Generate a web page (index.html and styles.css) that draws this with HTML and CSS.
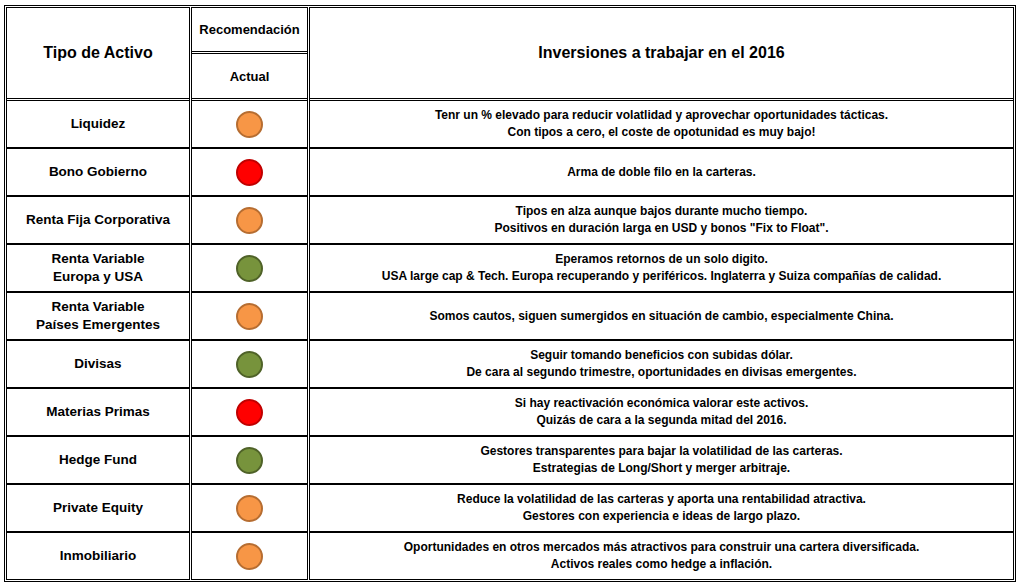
FILE: index.html
```html
<!DOCTYPE html>
<html lang="es">
<head>
    <meta charset="UTF-8">
    <meta name="viewport" content="width=device-width, initial-scale=1.0">
    <title>Inversiones 2016</title>
    <link rel="stylesheet" href="styles.css">
</head>
<body>
    <table class="assets">
        <colgroup>
            <col class="col-type">
            <col class="col-rec">
            <col class="col-desc">
        </colgroup>
        <thead>
            <tr class="head-top">
                <th rowspan="2" class="big">Tipo de Activo</th>
                <th class="rec">Recomendación</th>
                <th rowspan="2" class="big">Inversiones a trabajar en el 2016</th>
            </tr>
            <tr class="head-bottom">
                <th class="actual">Actual</th>
            </tr>
        </thead>
        <tbody>
            <tr>
                <td class="label">Liquidez</td>
                <td><span class="dot orange"></span></td>
                <td class="desc">Tenr un % elevado para reducir volatlidad y aprovechar oportunidades tácticas.<br>Con tipos a cero, el coste de opotunidad es muy bajo!</td>
            </tr>
            <tr>
                <td class="label">Bono Gobierno</td>
                <td><span class="dot red"></span></td>
                <td class="desc">Arma de doble filo en la carteras.</td>
            </tr>
            <tr>
                <td class="label">Renta Fija Corporativa</td>
                <td><span class="dot orange"></span></td>
                <td class="desc">Tipos en alza aunque bajos durante mucho tiempo.<br>Positivos en duración larga en USD y bonos "Fix to Float".</td>
            </tr>
            <tr>
                <td class="label">Renta Variable<br>Europa y USA</td>
                <td><span class="dot green"></span></td>
                <td class="desc">Eperamos retornos de un solo digito.<br>USA large cap &amp; Tech. Europa recuperando y periféricos. Inglaterra y Suiza compañías de calidad.</td>
            </tr>
            <tr>
                <td class="label">Renta Variable<br>Países Emergentes</td>
                <td><span class="dot orange"></span></td>
                <td class="desc">Somos cautos, siguen sumergidos en situación de cambio, especialmente China.</td>
            </tr>
            <tr>
                <td class="label">Divisas</td>
                <td><span class="dot green"></span></td>
                <td class="desc">Seguir tomando beneficios con subidas dólar.<br>De cara al segundo trimestre, oportunidades en divisas emergentes.</td>
            </tr>
            <tr>
                <td class="label">Materias Primas</td>
                <td><span class="dot red"></span></td>
                <td class="desc">Si hay reactivación económica valorar este activos.<br>Quizás de cara a la segunda mitad del 2016.</td>
            </tr>
            <tr>
                <td class="label">Hedge Fund</td>
                <td><span class="dot green"></span></td>
                <td class="desc">Gestores transparentes para bajar la volatilidad de las carteras.<br>Estrategias de Long/Short y merger arbitraje.</td>
            </tr>
            <tr>
                <td class="label">Private Equity</td>
                <td><span class="dot orange"></span></td>
                <td class="desc">Reduce la volatilidad de las carteras y aporta una rentabilidad atractiva.<br>Gestores con experiencia e ideas de largo plazo.</td>
            </tr>
            <tr class="last">
                <td class="label">Inmobiliario</td>
                <td><span class="dot orange"></span></td>
                <td class="desc">Oportunidades en otros mercados más atractivos para construir una cartera diversificada.<br>Activos reales como hedge a inflación.</td>
            </tr>
        </tbody>
    </table>
</body>
</html>
```

FILE: styles.css
```css
body {
    margin: 0;
    background: #fff;
    color: #000;
    font-family: 'Liberation Sans', Arial, sans-serif;
}
.assets {
    margin: 5px 0 0 4px;
    width: 1012px;
    table-layout: fixed;
    border-collapse: separate;
    border-spacing: 1px 0;
    border: 1px solid #000;
    padding: 1px 0;
}
.col-type {
    width: 184px;
}
.col-rec {
    width: 117px;
}
.col-desc {
    width: 705px;
}
.assets th,
.assets td {
    box-sizing: border-box;
    padding: 0;
    border: 1px solid #000;
    border-top: none;
    text-align: center;
    vertical-align: middle;
    font-weight: bold;
}
.assets thead th {
    border-bottom: 3px double #000;
}
.head-top th {
    border-top: 1px solid #000;
}
.head-top {
    height: 47px;
}
.head-bottom {
    height: 47px;
}
.big {
    font-size: 16px;
}
.rec,
.actual {
    font-size: 13px;
}
.assets tbody tr {
    height: 48px;
}
.assets tbody td {
    border-bottom: 2px solid #000;
}
.assets tbody tr.last {
    height: 47px;
}
.assets tbody tr.last td {
    border-bottom: 1px solid #000;
}
.label {
    font-size: 13.5px;
    line-height: 18px;
}
.desc {
    font-size: 12px;
    line-height: 17px;
}
.dot {
    display: inline-block;
    width: 23px;
    height: 23px;
    border-radius: 50%;
    border: 2px solid;
    vertical-align: middle;
}
.orange {
    background: #f79646;
    border-color: #b66d31;
}
.red {
    background: #ff0000;
    border-color: #c00000;
}
.green {
    background: #77933c;
    border-color: #4f6228;
}
```
